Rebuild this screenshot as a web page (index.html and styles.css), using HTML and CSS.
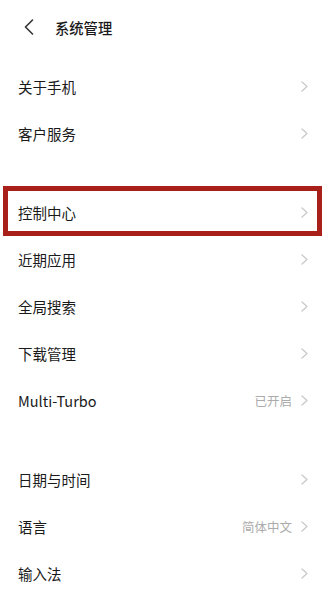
FILE: index.html
```html
<!DOCTYPE html>
<html lang="zh-CN">
<head>
    <meta charset="UTF-8">
    <meta name="viewport" content="width=device-width, initial-scale=1.0">
    <title>系统管理</title>
    <link rel="stylesheet" href="styles.css">
</head>
<body>
    <div class="header">
        <svg class="back" width="10" height="16" viewBox="0 0 10 16">
            <path d="M8.5 1 L1.5 8 L8.5 15" fill="none" stroke="#333" stroke-width="1.6" stroke-linecap="round" stroke-linejoin="round"/>
        </svg>
        <span class="title">系统管理</span>
    </div>

    <div class="group first">
        <div class="row"><span class="label">关于手机</span><span class="chev"></span></div>
        <div class="row"><span class="label">客户服务</span><span class="chev"></span></div>
    </div>

    <div class="group">
        <div class="row highlight"><span class="label">控制中心</span><span class="chev"></span></div>
        <div class="row"><span class="label">近期应用</span><span class="chev"></span></div>
        <div class="row"><span class="label">全局搜索</span><span class="chev"></span></div>
        <div class="row"><span class="label">下载管理</span><span class="chev"></span></div>
        <div class="row"><span class="label">Multi-Turbo</span><span class="value">已开启</span><span class="chev"></span></div>
    </div>

    <div class="group">
        <div class="row"><span class="label">日期与时间</span><span class="chev"></span></div>
        <div class="row"><span class="label">语言</span><span class="value">简体中文</span><span class="chev"></span></div>
        <div class="row"><span class="label">输入法</span><span class="chev"></span></div>
    </div>

    <script>
        document.querySelectorAll('.chev').forEach(function (el) {
            el.innerHTML = '<svg width="7" height="11" viewBox="0 0 7 11"><path d="M1 1 L6 5.5 L1 10" fill="none" stroke="#c9c9c9" stroke-width="1.3" stroke-linecap="round" stroke-linejoin="round"/></svg>';
        });
    </script>
</body>
</html>
```

FILE: styles.css
```css
body {
    margin: 0;
    background: #fff;
    font-family: "Noto Sans CJK SC", "Noto Sans", sans-serif;
    color: #1a1a1a;
}
.header {
    height: 54px;
    display: flex;
    align-items: center;
    padding-left: 24px;
}
.back {
    display: block;
    margin-right: 21px;
}
.title {
    font-size: 14.3px;
    font-weight: 500;
    color: #1a1a1a;
}
.group {
    margin-top: 32px;
}
.group.first {
    margin-top: 9px;
}
.row {
    height: 47px;
    display: flex;
    align-items: center;
    padding: 0 18px;
    position: relative;
}
.label {
    flex: 1;
    font-size: 14.5px;
    color: #1a1a1a;
}
.value {
    font-size: 12.5px;
    color: #ababab;
    margin-right: 9px;
}
.chev {
    display: flex;
    width: 7px;
}
.chev svg {
    display: block;
}
.highlight::after {
    content: "";
    position: absolute;
    left: 3px;
    right: 4px;
    top: -3px;
    bottom: 0;
    border: 5px solid #a91f1a;
}
```
